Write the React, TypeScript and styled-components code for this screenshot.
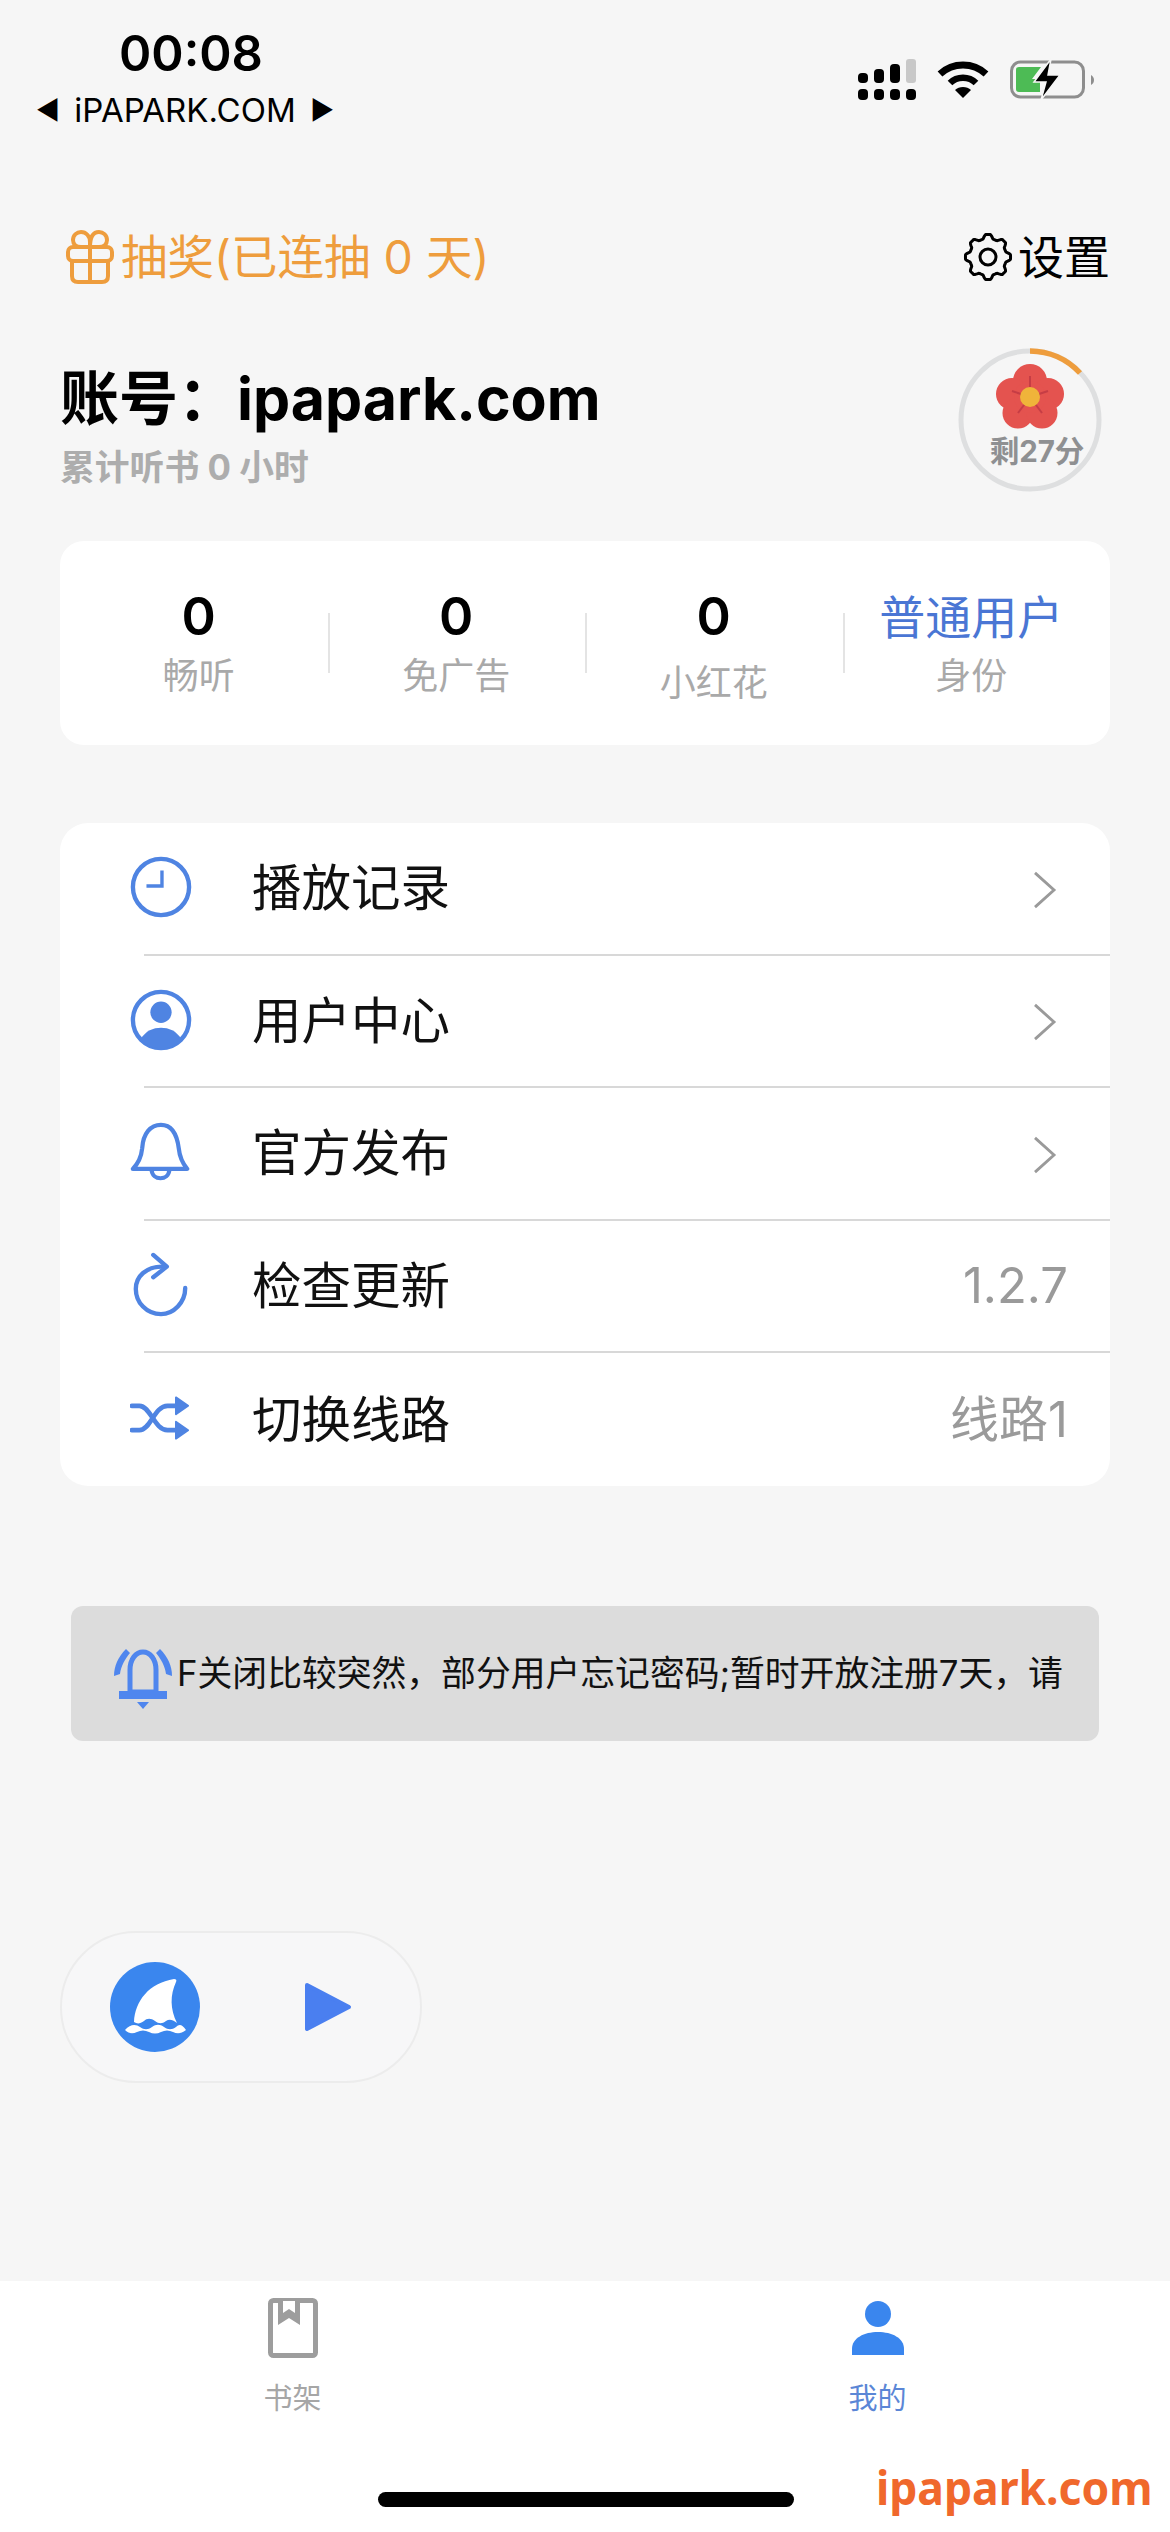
import React from "react";
import styled, { createGlobalStyle } from "styled-components";

const BLUE = "#4f84e2";
const FONT = `Inter, "Noto Sans CJK SC", sans-serif`;

const GlobalStyle = createGlobalStyle`
  html, body {
    margin: 0;
    padding: 0;
    background: #f6f6f6;
  }
  * {
    box-sizing: border-box;
  }
`;

const Page = styled.div`
  position: relative;
  width: 1170px;
  height: 2532px;
  display: flex;
  flex-direction: column;
  overflow: hidden;
  background: #f6f6f6;
  font-family: ${FONT};
`;

const StatusBar = styled.div`
  height: 130px;
  flex-shrink: 0;
  display: flex;
  justify-content: space-between;
  padding: 26px 0 0 36px;
`;

const StatusLeft = styled.div`
  width: 298px;
  display: flex;
  flex-direction: column;
  align-items: center;
`;

const Clock = styled.div`
  font-size: 49px;
  line-height: 56px;
  font-weight: 600;
  color: #000;
  margin-left: 12px;
`;

const Carrier = styled.div`
  display: flex;
  width: 100%;
  justify-content: space-between;
  align-items: center;
  margin-top: 8px;
  font-size: 33px;
  line-height: 40px;
  color: #000;
`;

const CarrierArrow = styled.span`
  font-size: 26px;
`;

const StatusRight = styled.div`
  display: flex;
  align-items: center;
  gap: 21px;
  height: 46px;
  margin: 31px 76px 0 0;
`;

const Main = styled.main`
  flex: 1;
  display: flex;
  flex-direction: column;
  padding: 99px 60px 0;
`;

const TopRow = styled.div`
  display: flex;
  justify-content: space-between;
  align-items: center;
  height: 56px;
`;

const Lottery = styled.div`
  display: flex;
  align-items: center;
  gap: 6px;
  padding-left: 5px;
  font-size: 46.5px;
  line-height: 56px;
  color: #ee9d3d;
`;

const Settings = styled.div`
  display: flex;
  align-items: center;
  gap: 5px;
  font-size: 46px;
  line-height: 56px;
  color: #000;
`;

const AccountRow = styled.div`
  display: flex;
  justify-content: space-between;
  align-items: center;
  margin-top: 63px;
  height: 144px;
`;

const AccountInfo = styled.div`
  display: flex;
  flex-direction: column;
  margin-top: 13px;
`;

const AccountName = styled.div`
  font-size: 59px;
  line-height: 72px;
  font-weight: 700;
  color: #000;
  white-space: nowrap;
`;

const AccountSub = styled.div`
  font-size: 34.8px;
  line-height: 46px;
  margin-top: 9px;
  font-weight: 700;
  color: #adadad;
  white-space: nowrap;
`;

const Quota = styled.div`
  position: relative;
  width: 144px;
  height: 144px;
  margin-right: 8px;
  display: flex;
  flex-direction: column;
  align-items: center;
  padding-top: 15px;
`;

const QuotaRing = styled.svg`
  position: absolute;
  inset: 0;
`;

const QuotaText = styled.div`
  font-size: 29.5px;
  line-height: 36px;
  margin: 4px 0 0 14px;
  font-weight: 700;
  color: #8f9092;
  white-space: nowrap;
`;

const StatsCard = styled.section`
  margin-top: 49px;
  height: 204px;
  flex-shrink: 0;
  display: grid;
  grid-template-columns: repeat(4, 1fr);
  align-items: center;
  padding: 0 10px;
  background: #fff;
  border-radius: 24px;
`;

const Stat = styled.div<{ $divider?: boolean }>`
  position: relative;
  display: flex;
  flex-direction: column;
  align-items: center;
  gap: 6px;

  &::before {
    content: "";
    display: ${(p) => (p.$divider ? "block" : "none")};
    position: absolute;
    left: 0;
    top: 26px;
    width: 2px;
    height: 60px;
    background: #e4e4e4;
  }
`;

const StatValue = styled.div<{ $accent?: boolean }>`
  font-size: ${(p) => (p.$accent ? "46px" : "52px")};
  line-height: 60px;
  font-weight: ${(p) => (p.$accent ? 400 : 600)};
  color: ${(p) => (p.$accent ? "#4a76d4" : "#000")};
  white-space: nowrap;
`;

const StatLabel = styled.div<{ $drop?: boolean }>`
  font-size: 36px;
  line-height: 46px;
  color: #a9a9a9;
  white-space: nowrap;
  transform: ${(p) => (p.$drop ? "translateY(7px)" : "none")};
`;

const MenuCard = styled.section`
  margin-top: 78px;
  flex-shrink: 0;
  display: flex;
  flex-direction: column;
  background: #fff;
  border-radius: 28px;
  overflow: hidden;
`;

const MenuRow = styled.div`
  display: flex;
  height: 132.6px;
`;

const MenuIcon = styled.div`
  width: 84px;
  flex-shrink: 0;
  padding: 0 0 4px 70px;
  display: flex;
  align-items: center;

  svg {
    flex-shrink: 0;
  }
`;

const MenuBody = styled.div<{ $line?: boolean }>`
  flex: 1;
  display: flex;
  align-items: center;
  justify-content: space-between;
  padding: 0 42px 0 108px;
  border-bottom: ${(p) => (p.$line ? "2px solid #d8d8d8" : "none")};
`;

const MenuLabel = styled.div`
  font-size: 49.5px;
  line-height: 60px;
  color: #111;
`;

const MenuValue = styled.div`
  font-size: 49px;
  line-height: 60px;
  color: #9a9a9a;
`;

const ChevronWrap = styled.div`
  display: flex;
  margin: 3px 11px 0 0;
`;

const Notice = styled.div`
  margin: 120px 11px 0;
  height: 135px;
  flex-shrink: 0;
  display: flex;
  align-items: center;
  padding: 0 36px 0 42px;
  background: #dcdcdc;
  border-radius: 12px;
  overflow: hidden;

  svg {
    flex-shrink: 0;
    margin: 12px 4px 0 0;
  }
`;

const NoticeText = styled.div`
  flex: 1;
  overflow: hidden;
  white-space: nowrap;
  font-size: 34.8px;
  line-height: 44px;
  color: #111;
`;

const Player = styled.div`
  margin-top: 190px;
  width: 362px;
  height: 152px;
  flex-shrink: 0;
  display: flex;
  align-items: center;
  padding-left: 48px;
  gap: 105px;
  background: #f7f7f8;
  border: 2px solid #ececec;
  border-radius: 76px;
`;

const TabBar = styled.nav`
  height: 251px;
  flex-shrink: 0;
  display: grid;
  grid-template-columns: 1fr 1fr;
  background: #fff;
  padding-top: 16px;
`;

const TabItem = styled.div`
  display: flex;
  flex-direction: column;
  align-items: center;
`;

const TabIconBox = styled.div`
  height: 62px;
  display: flex;
  align-items: center;
`;

const TabLabel = styled.div<{ $active?: boolean }>`
  margin-top: 20px;
  font-size: 29px;
  line-height: 40px;
  color: ${(p) => (p.$active ? "#5b86d6" : "#a6a6a6")};
`;

const HomeBar = styled.div`
  position: absolute;
  left: 378px;
  top: 2492px;
  width: 416px;
  height: 15px;
  border-radius: 8px;
  background: #000;
`;

const Watermark = styled.div`
  position: absolute;
  left: 876px;
  top: 2457px;
  font-family: "Noto Sans", sans-serif;
  font-size: 47px;
  line-height: 60px;
  font-weight: 700;
  color: #f0682c;
  transform: scaleX(0.945);
  transform-origin: left center;
  white-space: nowrap;
`;

// 8 lobed cog outline, computed so the teeth stay even
const cogPath = (() => {
  const pts: string[] = [];
  for (let a = 0; a < 360; a += 3) {
    const t = (a * Math.PI) / 180;
    const wave = Math.max(-0.6, Math.min(0.6, Math.cos(t * 8)));
    const r = 20.5 + wave * 3.4;
    pts.push(`${(25 + r * Math.cos(t)).toFixed(2)} ${(25 + r * Math.sin(t)).toFixed(2)}`);
  }
  return `M${pts.join("L")}Z`;
})();

const SignalIcon = () => (
  <svg width="58" height="42" viewBox="0 0 58 42">
    <g fill="#000">
      <rect x="0" y="14" width="10" height="10" rx="4" />
      <rect x="16" y="10" width="10" height="14" rx="4" />
      <rect x="32" y="5" width="10" height="19" rx="4" />
      <rect x="48" y="0" width="10" height="24" rx="3" fill="#c8c8c8" />
      <rect x="0" y="30" width="10" height="11" rx="4" />
      <rect x="16" y="30" width="10" height="11" rx="4" />
      <rect x="32" y="30" width="10" height="11" rx="4" />
      <rect x="48" y="30" width="10" height="11" rx="4" />
    </g>
  </svg>
);

const WifiIcon = () => (
  <svg width="52" height="38" viewBox="0 0 52 38">
    <path d="M3 13 C16 1 36 1 49 13" fill="none" stroke="#000" strokeWidth="7" />
    <path d="M13 22 C20 15 32 15 39 22" fill="none" stroke="#000" strokeWidth="6.5" />
    <path d="M18 29 C22 25 30 25 34 29 L26 37Z" fill="#000" />
  </svg>
);

const BatteryIcon = () => (
  <svg width="84" height="42" viewBox="0 0 84 42" overflow="visible">
    <rect x="1.5" y="3" width="72" height="35" rx="9" fill="none" stroke="#8e8e8e" strokeWidth="3" />
    <path d="M81 16 C83 17 84 19 84 21 C84 23 83 25 81 26Z" fill="#8e8e8e" />
    <path d="M9 8 H31 L22 20 H30 L30 33 H9 C7 33 6 32 6 30 V11 C6 9 7 8 9 8Z" fill="#4dbb55" />
    <path d="M41 0 L24 23 H36 L31 41 L50 16 H38Z" fill="#000" stroke="#f6f6f6" strokeWidth="1.5" />
  </svg>
);

const GiftIcon = () => (
  <svg width="50" height="54" viewBox="0 0 48 54" fill="none" stroke="#ee9d3d" strokeWidth="4" strokeLinejoin="round">
    <rect x="2" y="17" width="44" height="14" rx="5" />
    <path d="M6 31 V46 C6 50 8 52 12 52 H36 C40 52 42 50 42 46 V31" />
    <path d="M24 17 V52" />
    <path d="M24 17 H15 C10 17 7 14 7 10 C7 5 11 2 15 2 C20 2 24 6 24 12 V17 C24 6 28 2 33 2 C37 2 41 5 41 10 C41 14 38 17 33 17 H24" />
  </svg>
);

const CogIcon = () => (
  <svg width="50" height="50" viewBox="0 0 50 50" fill="none" stroke="#000" strokeWidth="3" strokeLinejoin="round">
    <path d={cogPath} />
    <circle cx="25" cy="25" r="8" />
  </svg>
);

const FlowerIcon = () => (
  <svg width="68" height="66" viewBox="0 0 68 66">
    <g fill="#e4534f">
      <circle cx="34" cy="18" r="17" />
      <circle cx="16" cy="31" r="16" />
      <circle cx="52" cy="31" r="16" />
      <circle cx="22" cy="50" r="15.5" />
      <circle cx="46" cy="50" r="15.5" />
      <circle cx="34" cy="34" r="16" />
    </g>
    <g stroke="#c63d45" strokeWidth="2">
      <path d="M34 32 V13" />
      <path d="M34 34 L16 28" />
      <path d="M34 34 L52 28" />
      <path d="M34 34 L22 50" />
      <path d="M34 34 L46 50" />
    </g>
    <circle cx="34" cy="34" r="10" fill="#f0b43a" />
  </svg>
);

const ClockIcon = () => (
  <svg width="62" height="62" viewBox="0 0 64 64" fill="none" stroke={BLUE} strokeWidth="4.5">
    <circle cx="32" cy="32" r="29" />
    <path d="M33 15 V31 H17" strokeWidth="3.5" />
  </svg>
);

const UserIcon = () => (
  <svg width="62" height="62" viewBox="0 0 64 64">
    <circle cx="32" cy="32" r="29" fill="none" stroke={BLUE} strokeWidth="4.5" />
    <circle cx="32" cy="24" r="11" fill={BLUE} />
    <path d="M11 52 C16 43 24 40 32 40 C40 40 48 43 53 52 C48 58 40 61 32 61 C24 61 16 58 11 52Z" fill={BLUE} />
  </svg>
);

const BellIcon = () => (
  <svg width="60" height="62" viewBox="0 0 64 64" fill="none" stroke={BLUE} strokeWidth="4.5" strokeLinejoin="round">
    <path d="M3 50 C9 44 12 38 13 28 C14 12 22 3 33 3 C44 3 50 12 52 28 C53 38 56 44 61 50 Z" />
    <path d="M23 51 C24 63 41 63 42 51" />
  </svg>
);

const RefreshIcon = () => (
  <svg width="62" height="66" viewBox="0 0 64 66" fill="none" stroke={BLUE} strokeWidth="4.5" strokeLinecap="round" strokeLinejoin="round">
    <path d="M57 36 C57 51 45 63 32 63 C17 63 6 51 6 37 C6 24 17 14 33 14" />
    <path d="M24 2 L38 14 L24 25" />
  </svg>
);

const ShuffleIcon = () => (
  <svg width="60" height="46" viewBox="0 0 64 48" fill="none" stroke={BLUE} strokeWidth="5" strokeLinecap="round">
    <path d="M2 11 H10 C22 11 26 37 40 37 H50" />
    <path d="M2 37 H10 C22 37 26 11 40 11 H50" />
    <path d="M49 2 L62 11 L49 20Z" fill={BLUE} strokeWidth="2" strokeLinejoin="round" />
    <path d="M49 28 L62 37 L49 46Z" fill={BLUE} strokeWidth="2" strokeLinejoin="round" />
  </svg>
);

const Chevron = () => (
  <svg width="25" height="38" viewBox="0 0 26 40" fill="none" stroke="#9a9a9a" strokeWidth="3">
    <path d="M3 2 L23 20 L3 38" />
  </svg>
);

const RingingBell = () => (
  <svg width="60" height="62" viewBox="0 0 60 62" fill="none">
    <path d="M30 4 C23 4 17 11 17 22 V44 H43 V22 C43 11 37 4 30 4Z" stroke="#4f86ee" strokeWidth="5" />
    <path d="M6 43 H54 V51 H6Z" fill="#4f86ee" />
    <path d="M24 54 H36 L30 61Z" fill="#4f86ee" />
    <path d="M13 1 C5 9 1 18 1 28 L7 26 C8 18 12 11 17 5Z" fill="#4f86ee" />
    <path d="M47 1 C55 9 59 18 59 28 L53 26 C52 18 48 11 43 5Z" fill="#4f86ee" />
  </svg>
);

const SharkLogo = () => (
  <svg width="90" height="90" viewBox="0 0 90 90">
    <circle cx="45" cy="45" r="45" fill="#3a86ee" />
    <path d="M24 60 C25 39 39 21 64 17 C66 17 67 18 66 20 C60 33 60 47 67 61 C62 57 59 57 56 59 C52 62 49 62 45 59 C41 56 37 56 34 59 C30 62 27 62 24 60Z" fill="#fff" />
    <path d="M15 68 C20 62 26 62 30 65 C34 68 38 68 42 65 C46 62 50 62 54 65 C58 68 62 68 66 65 C69 62 72 62 76 68 C71 72 67 72 63 70 C59 68 55 68 51 70 C47 72 43 72 39 70 C35 68 31 68 27 70 C23 72 19 72 15 68Z" fill="#fff" />
  </svg>
);

const PlayIcon = () => (
  <svg width="48" height="54" viewBox="0 0 48 54">
    <path d="M2 5 L44 27 L2 49Z" fill="#4a7ff0" stroke="#4a7ff0" strokeWidth="4" strokeLinejoin="round" />
  </svg>
);

const BookIcon = () => (
  <svg width="50" height="60" viewBox="0 0 50 60" fill="none">
    <rect x="2.5" y="2.5" width="45" height="55" rx="3" stroke="#9d9d9d" strokeWidth="5" />
    <path d="M10 3 H32 V27 L21 20 L10 27Z" fill="#9d9d9d" />
    <path d="M15 3 H27 V15 L21 11 L15 15Z" fill="#fff" />
  </svg>
);

const PersonIcon = () => (
  <svg width="52" height="54" viewBox="0 0 52 54">
    <ellipse cx="26" cy="13" rx="13" ry="13" fill="#3a86ee" />
    <path d="M0 54 V48 C0 37 12 31 26 31 C40 31 52 37 52 48 V54Z" fill="#3a86ee" />
  </svg>
);

const menuItems: { label: string; icon: React.ReactNode; value?: string }[] = [
  { label: "播放记录", icon: <ClockIcon /> },
  { label: "用户中心", icon: <UserIcon /> },
  { label: "官方发布", icon: <BellIcon /> },
  { label: "检查更新", icon: <RefreshIcon />, value: "1.2.7" },
  { label: "切换线路", icon: <ShuffleIcon />, value: "线路1" },
];

const stats = [
  { value: "0", label: "畅听" },
  { value: "0", label: "免广告" },
  { value: "0", label: "小红花", drop: true },
  { value: "普通用户", label: "身份", accent: true },
];

export default function App() {
  return (
    <Page>
      <GlobalStyle />
      <StatusBar>
        <StatusLeft>
          <Clock>00:08</Clock>
          <Carrier>
            <CarrierArrow>◀</CarrierArrow>
            <span>iPAPARK.COM</span>
            <CarrierArrow>▶</CarrierArrow>
          </Carrier>
        </StatusLeft>
        <StatusRight>
          <SignalIcon />
          <WifiIcon />
          <BatteryIcon />
        </StatusRight>
      </StatusBar>

      <Main>
        <TopRow>
          <Lottery>
            <GiftIcon />
            <span>抽奖(已连抽 0 天)</span>
          </Lottery>
          <Settings>
            <CogIcon />
            <span>设置</span>
          </Settings>
        </TopRow>

        <AccountRow>
          <AccountInfo>
            <AccountName>账号：ipapark.com</AccountName>
            <AccountSub>累计听书 0 小时</AccountSub>
          </AccountInfo>
          <Quota>
            <QuotaRing width="144" height="144" viewBox="0 0 144 144" fill="none">
              <circle cx="72" cy="72" r="69" stroke="#dedfe0" strokeWidth="5" />
              <path d="M72 3 A69 69 0 0 1 122 25" stroke="#ee9d3d" strokeWidth="5.5" />
            </QuotaRing>
            <FlowerIcon />
            <QuotaText>剩27分</QuotaText>
          </Quota>
        </AccountRow>

        <StatsCard>
          {stats.map((s, i) => (
            <Stat key={s.label} $divider={i > 0}>
              <StatValue $accent={s.accent}>{s.value}</StatValue>
              <StatLabel $drop={s.drop}>{s.label}</StatLabel>
            </Stat>
          ))}
        </StatsCard>

        <MenuCard>
          {menuItems.map((item, i) => (
            <MenuRow key={item.label}>
              <MenuIcon>{item.icon}</MenuIcon>
              <MenuBody $line={i < menuItems.length - 1}>
                <MenuLabel>{item.label}</MenuLabel>
                {item.value ? (
                  <MenuValue>{item.value}</MenuValue>
                ) : (
                  <ChevronWrap>
                    <Chevron />
                  </ChevronWrap>
                )}
              </MenuBody>
            </MenuRow>
          ))}
        </MenuCard>

        <Notice>
          <RingingBell />
          <NoticeText>F关闭比较突然，部分用户忘记密码;暂时开放注册7天，请</NoticeText>
        </Notice>

        <Player>
          <SharkLogo />
          <PlayIcon />
        </Player>
      </Main>

      <TabBar>
        <TabItem>
          <TabIconBox>
            <BookIcon />
          </TabIconBox>
          <TabLabel>书架</TabLabel>
        </TabItem>
        <TabItem>
          <TabIconBox>
            <PersonIcon />
          </TabIconBox>
          <TabLabel $active>我的</TabLabel>
        </TabItem>
      </TabBar>

      <HomeBar />
      <Watermark>ipapark.com</Watermark>
    </Page>
  );
}
